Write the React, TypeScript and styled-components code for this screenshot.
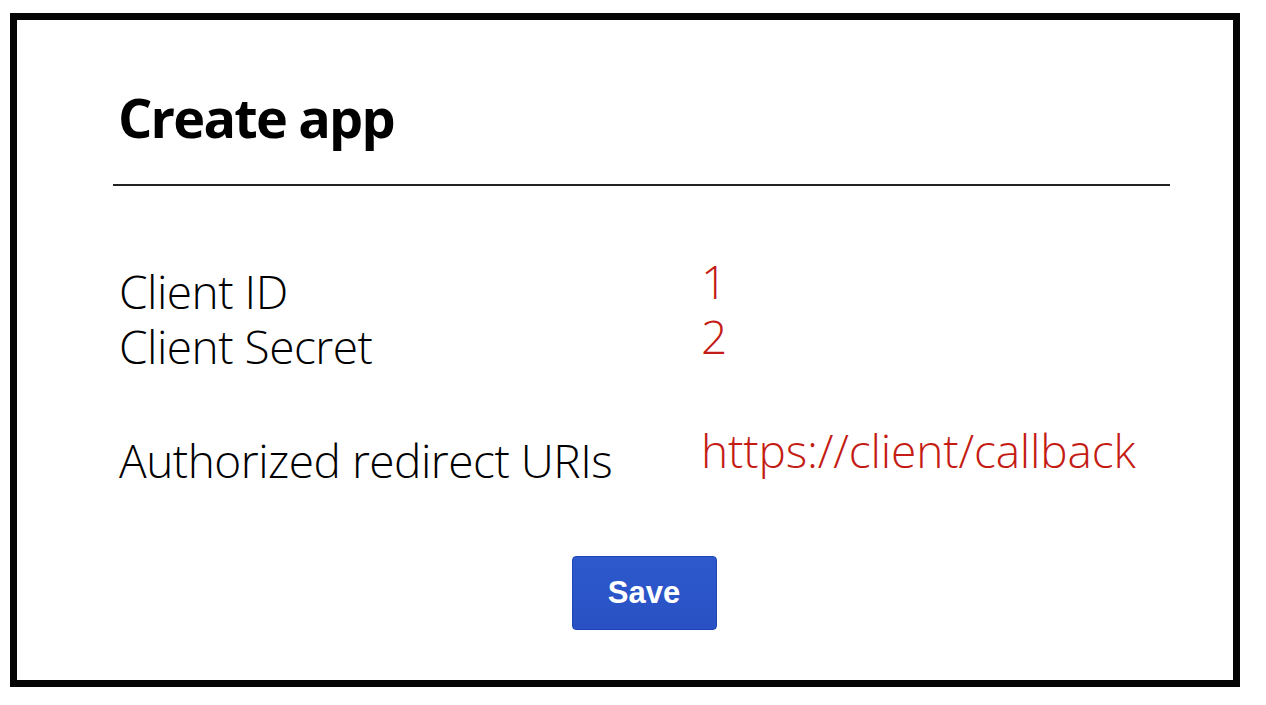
import React from "react";
import styled, { createGlobalStyle } from "styled-components";

const GlobalStyle = createGlobalStyle`
  html, body {
    margin: 0;
    padding: 0;
    background: #fff;
  }
  body {
    font-family: "Open Sans", "Noto Sans", sans-serif;
  }
`;

interface IField {
  label: string;
  value: string;
}

const fields: IField[][] = [
  [
    { label: "Client ID", value: "1" },
    { label: "Client Secret", value: "2" },
  ],
  [{ label: "Authorized redirect URIs", value: "https://client/callback" }],
];

const Frame = styled.div`
  box-sizing: border-box;
  width: 1230px;
  height: 674px;
  margin: 13px 0 0 10px;
  border: 7px solid #050505;
  padding: 0 63px 0 96px;
  display: flex;
  flex-direction: column;
`;

const Title = styled.h1`
  margin: 70px 0 0 0;
  padding-left: 5px;
  font-size: 54px;
  line-height: 1;
  font-weight: 700;
  letter-spacing: -1.8px;
  color: #000;
`;

const Divider = styled.hr`
  margin: 40px 0 0 0;
  border: none;
  height: 2px;
  background: #222;
`;

const Group = styled.div<{ $gap: number }>`
  margin-top: ${(p) => p.$gap}px;
  display: grid;
  grid-template-columns: 582px 1fr;
  align-items: start;
  padding-left: 6px;
`;

const Label = styled.div`
  font-size: 46px;
  font-weight: 300;
  line-height: 55px;
  letter-spacing: -0.5px;
  color: #000;
`;

// shorter line box lifts the value's baseline 10px above the label's
const Value = styled.div`
  font-size: 46px;
  font-weight: 300;
  line-height: 35px;
  letter-spacing: -0.15px;
  color: #c41c14;
`;

const Actions = styled.div`
  margin-top: 68px;
  display: flex;
  justify-content: center;
  padding-left: 5px;
`;

const SaveButton = styled.button`
  box-sizing: border-box;
  width: 145px;
  height: 74px;
  border: 1px solid #1f45b4;
  border-radius: 4px;
  background: linear-gradient(#2d59cc, #2951c4);
  color: #fff;
  font-family: "Liberation Sans", Arial, sans-serif;
  font-weight: 700;
  font-size: 31px;
  cursor: pointer;
  padding: 0;
`;

const App = () => {
  return (
    <>
      <GlobalStyle />
      <Frame>
        <Title>Create app</Title>
        <Divider />
        {fields.map((group, i) => (
          <Group key={i} $gap={i === 0 ? 78 : 59}>
            {group.map((f) => (
              <React.Fragment key={f.label}>
                <Label>{f.label}</Label>
                <Value>{f.value}</Value>
              </React.Fragment>
            ))}
          </Group>
        ))}
        <Actions>
          <SaveButton>Save</SaveButton>
        </Actions>
      </Frame>
    </>
  );
};

export default App;
